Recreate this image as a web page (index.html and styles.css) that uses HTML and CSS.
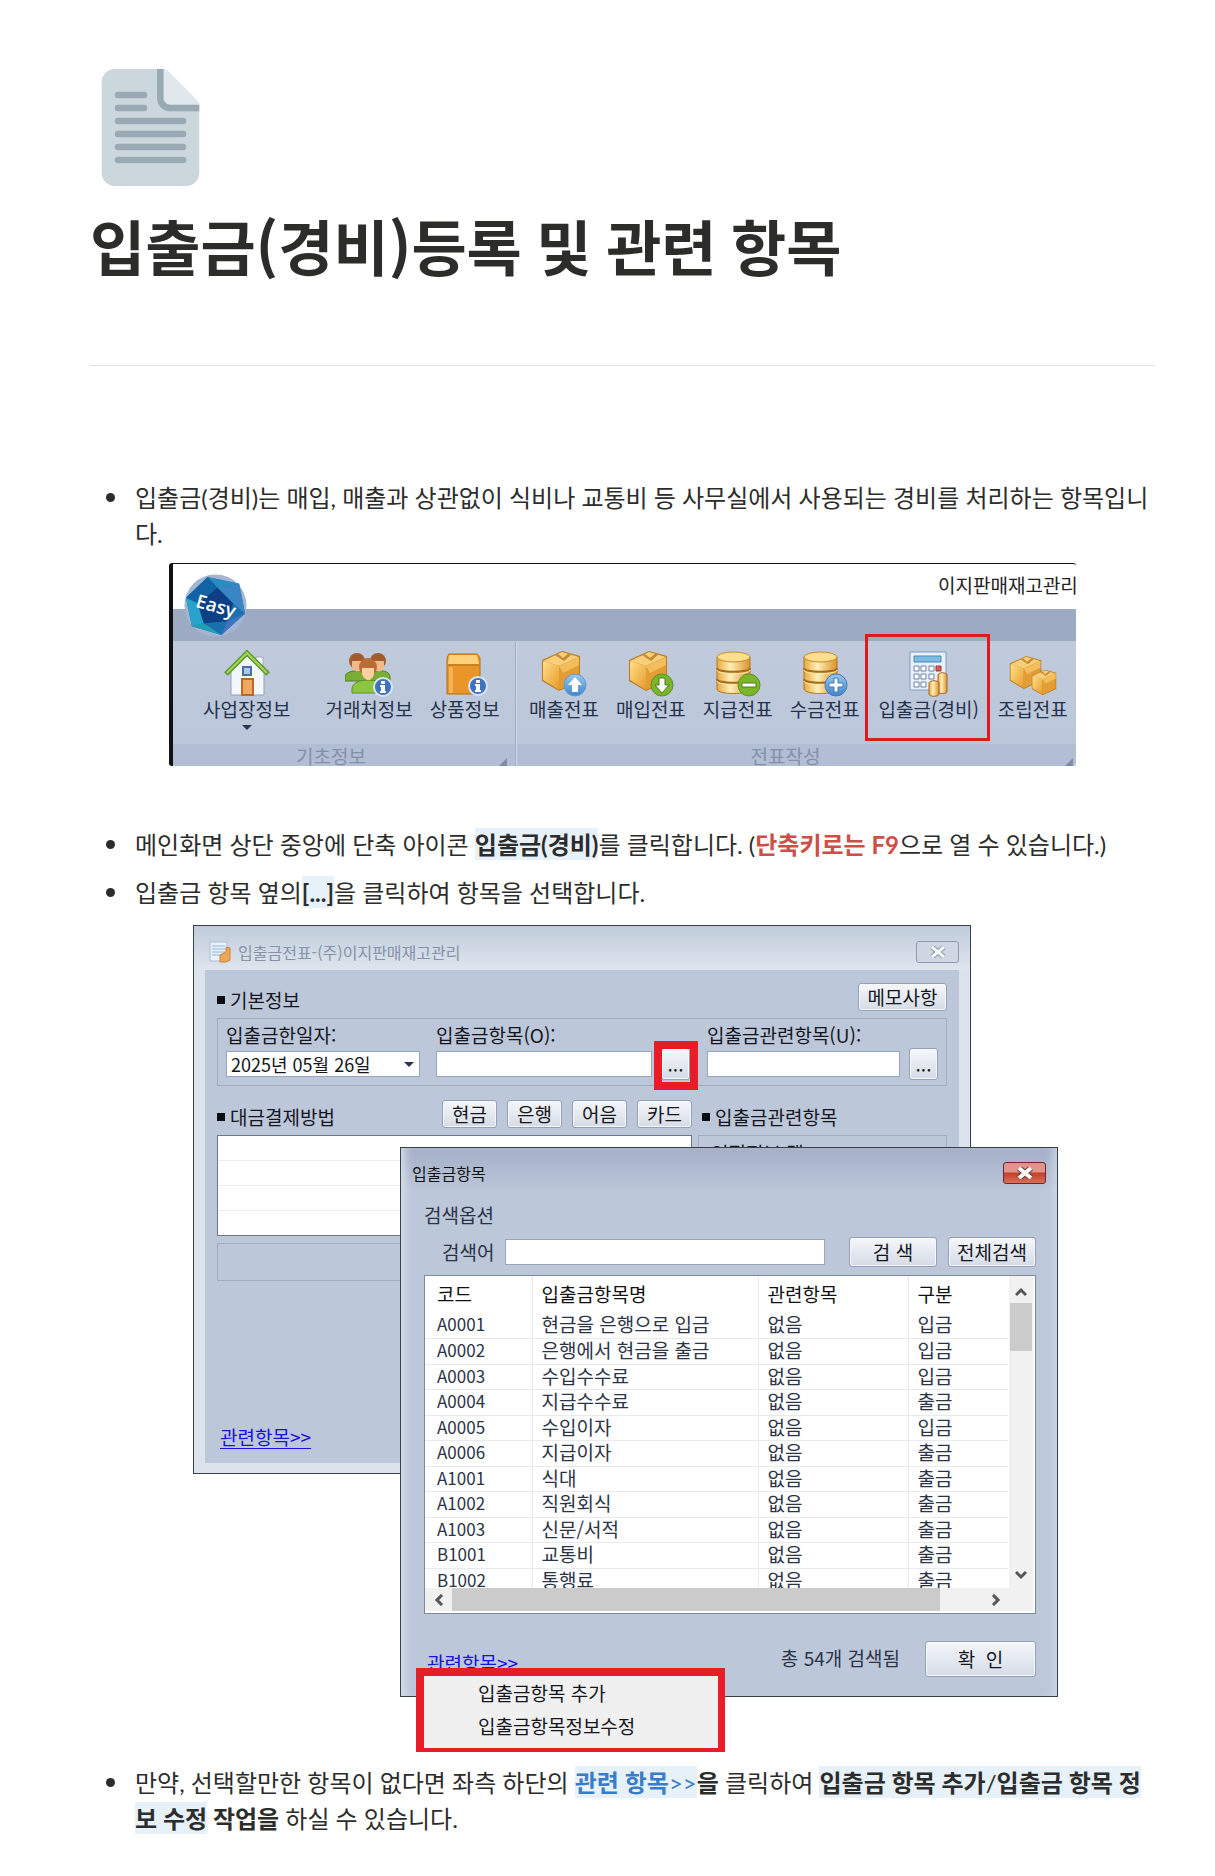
FILE: index.html
```html
<!DOCTYPE html>
<html lang="ko">
<head>
<meta charset="utf-8">
<meta name="viewport" content="width=device-width, initial-scale=1">
<title>입출금(경비)등록 및 관련 항목</title>
<link rel="stylesheet" href="styles.css">
</head>
<body>
<svg class="defs" aria-hidden="true">
  <defs>
    <linearGradient id="gold" x1="0" y1="0" x2="1" y2="1">
      <stop offset="0" stop-color="#ffe08a"/><stop offset="1" stop-color="#e8992a"/>
    </linearGradient>
    <linearGradient id="coin" x1="0" y1="0" x2="1" y2="0">
      <stop offset="0" stop-color="#e9a83c"/><stop offset=".4" stop-color="#fff0b8"/><stop offset="1" stop-color="#dc922a"/>
    </linearGradient>
    <linearGradient id="sky" x1="0" y1="0" x2="0" y2="1">
      <stop offset="0" stop-color="#9cc8ee"/><stop offset="1" stop-color="#3f86cc"/>
    </linearGradient>
    <symbol id="box" viewBox="0 0 40 42">
      <path d="M1 10 21 1l18 5v25L18 41 1 31z" fill="#b97a20"/>
      <path d="M2 11 21 2l17 5-20 9z" fill="#f7cf7b"/>
      <path d="M2 11l16 5v24L2 30z" fill="url(#gold)"/>
      <path d="M18 16 38 7v23L18 40z" fill="#e39d35"/>
      <path d="M18 16 38 7v8L22 23z" fill="#f3bd5c"/>
      <path d="M14 5l9 6 8-7-3-1-6 5-5-4z" fill="#c58a32"/>
    </symbol>
    <symbol id="coins" viewBox="0 0 36 44">
      <path d="M1 6v32c0 6 33 6 33 0V6z" fill="url(#coin)" stroke="#b27420"/>
      <ellipse cx="17.500" cy="6" rx="16.500" ry="5" fill="#ffdf8c" stroke="#c68a2e"/>
      <path d="M1 17c0 5 33 5 33 0M1 28c0 5 33 5 33 0" fill="none" stroke="#a86c1c" stroke-width="2"/>
      <path d="M1 19c0 5 33 5 33 0M1 30c0 5 33 5 33 0" fill="none" stroke="#ffe9a8"/>
    </symbol>
    <symbol id="info" viewBox="0 0 20 20">
      <circle cx="10" cy="10" r="9" fill="#3f73bd" stroke="#d8e6f7" stroke-width="2"/>
      <path d="M8 8h4v6h1v2H7v-2h1v-4H7V8zM8 4h4v3H8z" fill="#fff"/>
    </symbol>
  </defs>
</svg>

<main class="page">
  <header class="page-header">
    <svg class="page-icon" viewBox="0 0 36 36" aria-hidden="true">
      <path fill="#e1e8ed" d="M22 0c.6 0 1.100.200 1.400.600l9 9c.4.400.6.900.6 1.400v1H21V0z"/>
      <path fill="#ccd6dd" d="M22 0H7C4.800 0 3 1.800 3 4v28c0 2.200 1.800 4 4 4h22c2.200 0 4-1.800 4-4V11h-9c-1 0-2-1-2-2z"/>
      <path fill="#99aab5" d="M22 0h-2v9c0 2.200 1.800 4 4 4h9v-2h-9c-1 0-2-1-2-2z"/>
      <path stroke="#99aab5" stroke-width="2" stroke-linecap="round" d="M8 8h8M8 12h8M8 16h20M8 20h20M8 24h20M8 28h20"/>
    </svg>
    <h1>입출금<span class="korean">(경비)</span>등록 및 관련 항목</h1>
  </header>
  <hr>

  <ul class="guide">
    <li>
      <p>입출금(경비)는 매입, 매출과 상관없이 식비나 교통비 등 사무실에서 사용되는 경비를 처리하는 항목입니다.</p>
      <figure class="ribbon">
        <div class="ribbon-title">이지판매재고관리</div>
        <div class="ribbon-tabs"></div>
        <svg class="ribbon-logo" viewBox="0 0 64 64" aria-hidden="true">
          <circle cx="32" cy="32" r="31.500" fill="#a3b5d3"/>
          <path d="M24 3 56 10 62 40 38 62 8 53 2 24z" fill="#1971ad"/>
          <path d="M24 3 56 10 34 14z" fill="#2b8cc0"/><path d="M24 3 34 14 14 30 2 24z" fill="#1263a4"/>
          <path d="M56 10 62 40 50 30 34 14z" fill="#3a86c4"/><path d="M2 24 14 30 20 50 8 53z" fill="#29a3cb"/>
          <path d="M8 53 20 50 38 62z" fill="#1fa0b4"/><path d="M62 40 38 62 44 48z" fill="#4273bd"/>
          <path d="M34 14 50 30 44 48 20 50 14 30z" fill="#0c3f83"/>
          <text x="32" y="39" transform="rotate(16 32 34)" text-anchor="middle" class="logo-text">Easy</text>
        </svg>
        <div class="ribbon-groups">
          <section class="group group-basic">
            <div class="tools">
              <button class="tool tool-menu" type="button">
                <svg viewBox="0 0 48 48" aria-hidden="true">
                  <path d="M33 8h7v13h-7z" fill="#f5f7fb" stroke="#9aa7be"/>
                  <path d="M8 22 24 7l17 15v24H8z" fill="#f4f7fc" stroke="#92a0ba"/>
                  <path d="M3 25 24 4l21 21" fill="none" stroke="#5c9a2b" stroke-width="5"/>
                  <path d="M4 24 24 4l20 20" fill="none" stroke="#a4d45a" stroke-width="2"/>
                  <path d="M20 18h8v8h-8z" fill="#a8c8ec" stroke="#4c6fa8" stroke-width="2"/>
                  <path d="M19 30h11v16H19z" fill="#f0a860" stroke="#b8682a" stroke-width="2"/>
                </svg>
                <span>사업장정보</span><i class="caret"></i>
              </button>
              <button class="tool" type="button">
                <svg viewBox="0 0 48 48" aria-hidden="true">
                  <path d="M0 27c2-7 22-7 24 0v5H0zM24 27c2-7 20-7 21 0v5H24z" fill="#79ad35" stroke="#558522"/>
                  <circle cx="12" cy="12" r="8" fill="#a45c2c"/><path d="M7 12h11v6c-2 6-8 6-11 0z" fill="#f2b98a"/>
                  <circle cx="33" cy="12" r="8" fill="#a45c2c"/><path d="M28 12h11v6c-2 6-8 6-11 0z" fill="#f2b98a"/>
                  <path d="M7 40c0-12 32-12 32 0v4H7z" fill="#8cc63f" stroke="#5c9126"/>
                  <circle cx="23" cy="18" r="9" fill="#b96c35"/><path d="M17 19h12v6c-2 8-9 8-12 0z" fill="#ffcfa3"/>
                  <use href="#info" x="28" y="28" width="20" height="20"/>
                </svg>
                <span>거래처정보</span>
              </button>
              <button class="tool" type="button">
                <svg viewBox="0 0 48 48" aria-hidden="true">
                  <path d="M8 5h28l3 4v36H6V9z" fill="#e8952a" stroke="#b26c14"/>
                  <path d="M8 6h28l2 9H7z" fill="#ffd27a"/><path d="M7 15h31v2H7z" fill="#c9801f"/>
                  <path d="M8 18h4v26H8z" fill="#f7b452"/>
                  <use href="#info" x="27" y="27" width="20" height="20"/>
                </svg>
                <span>상품정보</span>
              </button>
            </div>
            <footer>기초정보</footer>
          </section>
          <section class="group group-slips">
            <div class="tools">
              <button class="tool" type="button">
                <svg viewBox="0 0 48 48" aria-hidden="true">
                  <use href="#box" x="1" y="1" width="40" height="42"/>
                  <circle cx="35" cy="36" r="11" fill="url(#sky)" stroke="#5e9bd6"/>
                  <path d="M35 28l7 8h-4v7h-6v-7h-4z" fill="#fff"/>
                </svg>
                <span>매출전표</span>
              </button>
              <button class="tool" type="button">
                <svg viewBox="0 0 48 48" aria-hidden="true">
                  <use href="#box" x="1" y="1" width="40" height="42"/>
                  <circle cx="35" cy="36" r="11" fill="#7db52a" stroke="#5c9126"/>
                  <path d="M35 44l7-8h-4v-7h-6v7h-4z" fill="#fff" stroke="#4d7d1c"/>
                </svg>
                <span>매입전표</span>
              </button>
              <button class="tool" type="button">
                <svg viewBox="0 0 48 48" aria-hidden="true">
                  <use href="#coins" x="2" y="2" width="36" height="44"/>
                  <circle cx="35" cy="36" r="11" fill="#7db52a" stroke="#5c9126"/>
                  <path d="M28 34h14v4H28z" fill="#fff" stroke="#4d7d1c"/>
                </svg>
                <span>지급전표</span>
              </button>
              <button class="tool" type="button">
                <svg viewBox="0 0 48 48" aria-hidden="true">
                  <use href="#coins" x="2" y="2" width="36" height="44"/>
                  <circle cx="35" cy="36" r="11" fill="url(#sky)" stroke="#3f78bb"/>
                  <path d="M33 29h4v5h5v4h-5v5h-4v-5h-5v-4h5z" fill="#fff" stroke="#3f78bb"/>
                </svg>
                <span>수금전표</span>
              </button>
              <button class="tool tool-marked" type="button">
                <svg viewBox="0 0 48 48" aria-hidden="true">
                  <path d="M5 3h36v38H5z" fill="#e9f1fb" stroke="#7f9cc6"/>
                  <path d="M9 7h27v6H9z" fill="#7dbce0" stroke="#4b87b4"/>
                  <path d="M9 17h5v5H9zM16 17h5v5h-5zM24 17h5v5h-5zM9 25h5v5H9zM16 25h5v5h-5zM24 25h5v5h-5zM9 33h5v5H9zM16 33h5v5h-5z" fill="#fff" stroke="#6d82ad"/>
                  <path d="M31 17h5v5h-5z" fill="#d85a50" stroke="#9c3a3a"/>
                  <path d="M33 26v17c0 2 9 2 9 0V26c0-3-9-3-9 0z" fill="url(#coin)" stroke="#a8632a"/>
                  <path d="M24 34v11c0 3 10 3 10 0V34c0-3-10-3-10 0z" fill="url(#coin)" stroke="#a8632a"/>
                </svg>
                <span>입출금(경비)</span>
              </button>
              <button class="tool" type="button">
                <svg viewBox="0 0 48 48" aria-hidden="true">
                  <use href="#box" x="0" y="6" width="33" height="35"/>
                  <use href="#box" x="22" y="20" width="26" height="27"/>
                </svg>
                <span>조립전표</span>
              </button>
            </div>
            <footer>전표작성</footer>
          </section>
        </div>
      </figure>
    </li>

    <li>
      <p>메인화면 상단 중앙에 단축 아이콘 <mark><b>입출금(경비)</b></mark>를 클릭합니다. (<b class="red">단축키로는 F9</b>으로 열 수 있습니다.)</p>
    </li>

    <li>
      <p>입출금 항목 옆의<mark><b>[...]</b></mark>을 클릭하여 항목을 선택합니다.</p>
      <figure class="desktop">
        <section class="window slip">
          <div class="titlebar">
            <svg viewBox="0 0 22 24" aria-hidden="true">
              <path d="M1 2h17v19H1z" fill="#e9f2fb" stroke="#a9bcd6"/>
              <path d="M3 6h13M3 9h13M3 12h13M3 15h10" stroke="#8fb4da"/>
              <path d="M11 15v7h6l4-2V8l-4-1v5z" fill="#eda75a" stroke="#cc8138"/>
            </svg>
            <span>입출금전표-(주)이지판매재고관리</span>
            <button class="close" type="button" aria-label="닫기"><svg viewBox="0 0 16 12" aria-hidden="true"><path d="M2 1 14 11M14 1 2 11" stroke="#8995aa" stroke-width="5"/><path d="M2 1 14 11M14 1 2 11" stroke="#fff" stroke-width="3"/></svg></button>
          </div>
          <div class="slip-body">
            <div class="bar">
              <h2>기본정보</h2>
              <button class="btn btn-memo" type="button">메모사항</button>
            </div>
            <div class="fields">
              <div class="field field-date">
                <label for="date">입출금한일자:</label>
                <div class="control"><select id="date"><option>2025년 05월 26일</option></select><i class="caret"></i></div>
              </div>
              <div class="field field-item">
                <label for="item">입출금항목(O):</label>
                <div class="control"><input id="item" type="text"><button class="btn more more-marked" type="button">...</button></div>
              </div>
              <div class="field field-related">
                <label for="related">입출금관련항목(U):</label>
                <div class="control"><input id="related" type="text"><button class="btn more" type="button">...</button></div>
              </div>
            </div>
            <div class="columns">
              <div class="bar">
                <h2>대금결제방법</h2>
                <div class="methods">
                  <button class="btn" type="button">현금</button>
                  <button class="btn" type="button">은행</button>
                  <button class="btn" type="button">어음</button>
                  <button class="btn" type="button">카드</button>
                </div>
              </div>
              <div class="bar"><h2>입출금관련항목</h2></div>
              <div class="payments"></div>
              <div class="panel">인적정보 탭</div>
            </div>
            <div class="panel summary"></div>
            <a class="link" href="#related-items">관련항목&gt;&gt;</a>
          </div>
        </section>

        <section class="window picker">
          <div class="titlebar">
            <span>입출금항목</span>
            <button class="close close-red" type="button" aria-label="닫기"><svg viewBox="0 0 16 12" aria-hidden="true"><path d="M2 1 14 11M14 1 2 11" stroke="#6b3a3a" stroke-width="6"/><path d="M2 1 14 11M14 1 2 11" stroke="#fff" stroke-width="4"/></svg></button>
          </div>
          <div class="picker-body">
            <div class="picker-heading">검색옵션</div>
            <div class="search">
              <label for="keyword">검색어</label>
              <input id="keyword" type="text">
              <button class="btn" type="button">검 색</button>
              <button class="btn" type="button">전체검색</button>
            </div>
            <div class="grid">
              <div class="grid-view">
                <table>
                  <thead><tr><th>코드</th><th>입출금항목명</th><th>관련항목</th><th>구분</th></tr></thead>
                  <tbody>
                    <tr><td>A0001</td><td>현금을 은행으로 입금</td><td>없음</td><td>입금</td></tr>
                    <tr><td>A0002</td><td>은행에서 현금을 출금</td><td>없음</td><td>입금</td></tr>
                    <tr><td>A0003</td><td>수입수수료</td><td>없음</td><td>입금</td></tr>
                    <tr><td>A0004</td><td>지급수수료</td><td>없음</td><td>출금</td></tr>
                    <tr><td>A0005</td><td>수입이자</td><td>없음</td><td>입금</td></tr>
                    <tr><td>A0006</td><td>지급이자</td><td>없음</td><td>출금</td></tr>
                    <tr><td>A1001</td><td>식대</td><td>없음</td><td>출금</td></tr>
                    <tr><td>A1002</td><td>직원회식</td><td>없음</td><td>출금</td></tr>
                    <tr><td>A1003</td><td>신문/서적</td><td>없음</td><td>출금</td></tr>
                    <tr><td>B1001</td><td>교통비</td><td>없음</td><td>출금</td></tr>
                    <tr><td>B1002</td><td>통행료</td><td>없음</td><td>출금</td></tr>
                  </tbody>
                </table>
              </div>
              <div class="vscroll">
                <svg viewBox="0 0 12 10" aria-hidden="true"><path d="M1 8 6 3l5 5"/></svg>
                <div class="thumb"></div>
                <svg viewBox="0 0 12 10" aria-hidden="true"><path d="M1 2l5 5 5-5"/></svg>
              </div>
              <div class="hscroll">
                <svg viewBox="0 0 10 12" aria-hidden="true"><path d="M8 1 3 6l5 5"/></svg>
                <div class="thumb"></div>
                <svg viewBox="0 0 10 12" aria-hidden="true"><path d="M2 1l5 5-5 5"/></svg>
              </div>
            </div>
            <div class="picker-footer">
              <a class="link" href="#related-items">관련항목&gt;&gt;</a>
              <span class="count">총 54개 검색됨</span>
              <button class="btn" type="button">확&nbsp; 인</button>
            </div>
          </div>
        </section>

        <div class="menu" role="menu">
          <button type="button" role="menuitem">입출금항목 추가</button>
          <button type="button" role="menuitem">입출금항목정보수정</button>
        </div>
      </figure>
    </li>

    <li>
      <p>만약, 선택할만한 항목이 없다면 좌측 하단의 <mark class="blue"><b>관련 항목</b>&gt;&gt;</mark><b>을</b> 클릭하여 <mark><b>입출금 항목 추가</b>/<b>입출금 항목 정보 수정</b></mark><b> 작업을</b> 하실 수 있습니다.</p>
    </li>
  </ul>
</main>
</body>
</html>
```
FILE: styles.css
```css
* { box-sizing: border-box; }

body {
  margin: 0;
  background: #fff;
  color: #2c2c2b;
  font-family: Lato, "Noto Sans CJK KR", sans-serif;
  font-size: 24px;
  line-height: 36px;
}

button, input, select { font: inherit; color: inherit; margin: 0; }
h1, h2, p, figure { margin: 0; }

.defs { position: absolute; width: 0; height: 0; }

.page { padding: 69px 60px 39px 90px; }

.page-icon { display: block; width: 117px; height: 117px; margin-left: 2px; }

h1 { margin-top: 26px; font-size: 60px; font-weight: 700; line-height: 72px; }
.korean { font-family: "Noto Sans CJK KR", sans-serif; line-height: 1; }

hr { margin: 81px 0 0; border: 0; border-top: 1px solid #e3e3e1; }

/* Guide list */
.guide { list-style: none; margin: 108px 0 0; padding: 0; }
.guide li { display: grid; grid-template-columns: 45px minmax(0, 1fr); padding: 6px 0; }
.guide li::before { content: ""; width: 9px; height: 9px; margin: 13px 0 0 16px; border-radius: 50%; background: #2c2c2b; }
.guide p { grid-column: 2; }
.guide figure { grid-column: 1 / -1; justify-self: center; max-width: 100%; font-family: "Noto Sans CJK KR", sans-serif; }

mark { background: #e7f1fa; color: inherit; padding: 2px 0 1px; }
.red { color: #cd4f45; }
.blue { color: #387dc9; }

/* Ribbon toolbar */
.ribbon {
  position: relative;
  width: 907px;
  margin: 11px 0 49px;
  overflow: hidden;
  border: solid #111;
  border-width: 1px 0 0 4px;
  border-radius: 3px;
  background: #fff;
  color: #26324c;
  font-size: 19px;
  line-height: 20px;
}
.ribbon-title { width: 138px; height: 45px; margin-left: auto; padding-top: 11px; overflow: hidden; white-space: nowrap; color: #222; }
.ribbon-tabs { height: 32px; background: #9caac3; }
.ribbon-logo { position: absolute; left: 11px; top: 10px; width: 63px; height: 63px; }
.logo-text { font: 600 19px "Open Sans", sans-serif; fill: #fff; }
.ribbon-groups { display: flex; height: 125px; background: linear-gradient(#c0cadb, #b9c6da); }
.group { display: flex; flex-direction: column; position: relative; }
.group-basic { flex: 0 0 343px; border-right: 1px solid #9facc4; }
.group-slips { flex: 1; border-left: 1px solid #d0d9e7; }
.group::after { content: ""; position: absolute; right: 8px; bottom: 0; border: 4px solid transparent; border-right-color: #7f8ba5; border-bottom-color: #7f8ba5; }
.group-slips::after { right: 3px; }
.tools { display: flex; gap: 17px; height: 104px; padding: 8px 0 0 12px; }
.group-basic .tools { padding-left: 30px; }
.group footer { flex: 1; background: #b1bed3; color: #8490a8; text-align: center; padding-top: 2px; }
.group-basic footer { padding-right: 26px; }
.group-slips footer { padding-right: 22px; }
.tool { display: flex; flex-direction: column; align-items: center; position: relative; flex: none; height: 90px; padding: 0; border: 0; background: none; }
.tool svg { width: 48px; height: 48px; margin-bottom: 2px; }
.tool-menu { margin-right: 18px; }
.tool-marked { width: 104px; }
.tool-marked::after { content: ""; position: absolute; inset: -15px -9px -2px -12px; border: 3px solid #dd1a22; }
.caret { border: 5px solid transparent; border-top-color: #2c3650; border-bottom: 0; }
.tool .caret { margin-top: 6px; }

/* Program windows */
.desktop { position: relative; width: 867px; height: 827px; margin: 14px 0 1px; color: #14161c; font-size: 19px; line-height: 20px; }
.window { position: absolute; border: 1px solid #3a3f4a; }
.titlebar { display: flex; align-items: center; font-size: 16px; }
.close { display: grid; place-items: center; width: 43px; height: 22px; margin-left: auto; padding: 0; border: 1px solid #8e9ab2; border-radius: 3px; background: #cfd7e5; }
.close svg { width: 16px; height: 12px; }
.close-red { border-color: #6d2630; background: linear-gradient(#e0958c 45%, #c33e27 50%, #d9705a); }
.btn { flex: none; height: 28px; padding: 0; border: 1px solid #94a1b8; border-radius: 3px; background: linear-gradient(#f5f7fa, #d5dbe6); box-shadow: inset 0 0 0 1px #f6f8fb; line-height: 22px; }
.link { color: #1a12df; text-decoration: underline; text-underline-offset: 3px; }
.desktop input, .desktop select { height: 26px; padding: 0 4px; border: 1px solid #9aa6bc; border-radius: 0; background: #fff; }

.slip { left: 4px; top: 0; width: 778px; height: 549px; padding: 0 11px 11px; background: #dde3ec; }
.slip .titlebar { height: 44px; margin: 0 -11px; padding: 8px 11px 0 15px; gap: 7px; background: linear-gradient(#c0ccdc, #dfe5ed); color: #8592aa; }
.slip .titlebar > svg { width: 22px; height: 24px; }
.slip-body { display: flex; flex-direction: column; height: 493px; padding: 13px 12px 16px; background: #bcc7d9; }
.bar { display: flex; justify-content: space-between; align-items: center; height: 28px; }
h2 { display: flex; align-items: center; gap: 5px; padding-top: 6px; font-size: 19px; font-weight: 400; line-height: 20px; }
h2::before { content: ""; width: 8px; height: 8px; background: #0b0b12; }
.btn-memo { width: 89px; }
.fields { display: flex; height: 68px; margin-top: 7px; padding: 6px 8px 5px; border: 1px solid #9fabc0; }
.field { display: flex; flex: none; flex-direction: column; gap: 3px; white-space: nowrap; }
.field-date { width: 194px; margin-right: 16px; }
.field-item { width: 254px; margin-right: 17px; }
.field-related { flex: 1; min-width: 0; }
.control { display: flex; align-items: center; gap: 9px; height: 32px; position: relative; }
.control input, .control select { flex: 1; min-width: 0; }
.control select { appearance: none; font-size: 18px; line-height: 24px; }
.control .caret { position: absolute; right: 6px; }
.more { position: relative; width: 29px; height: 32px; }
.more-marked::after { content: ""; position: absolute; inset: -8px -9px -11px -8px; border: 8px solid #e81d28; }
.columns { display: grid; grid-template-columns: 475px 1fr; column-gap: 6px; row-gap: 7px; margin-top: 14px; }
.columns .bar + .bar { padding-left: 4px; }
.methods { display: flex; gap: 10px; }
.methods .btn { width: 55px; }
.payments { height: 101px; border: 1px solid #6e7788; background: repeating-linear-gradient(#fff 0 24px, #ebedf0 24px 25px); }
.panel { padding: 7px 12px; border: 1px solid #9fabc0; }
.summary { height: 38px; margin-top: 7px; }
.slip .link { align-self: flex-start; margin: auto 0 0 3px; }

.picker { left: 211px; top: 222px; width: 658px; height: 550px; background: linear-gradient(#a3afc7, #bcc7d9 44px); box-shadow: inset 10px 0 8px -6px #d6deeb, inset -10px 0 8px -6px #cbd6e6; color: #2b3346; }
.picker .titlebar { height: 42px; padding: 7px 11px 0; color: #111; }
.picker-body { padding: 15px 21px 0 23px; }
.search { display: flex; align-items: center; height: 30px; margin-top: 12px; padding-left: 18px; }
.search input { flex: 1; min-width: 0; margin: 0 24px 0 11px; }
.search .btn { width: 88px; height: 30px; color: #14161c; }
.search .btn + .btn { margin-left: 11px; }
.grid { display: grid; grid-template: 312px 1fr / 1fr 24px; height: 339px; margin-top: 8px; padding: 0 2px 2px 0; border: 1px solid #7f899c; background: #fff; }
.grid-view { overflow: hidden; padding-right: 1px; }
table { width: 100%; border-collapse: collapse; table-layout: fixed; line-height: 20px; }
th { height: 37px; color: #111; font-weight: 400; }
th, td { padding: 0 0 2px 9px; text-align: left; white-space: nowrap; border-right: 1px solid #e9eaee; }
th:last-child, td:last-child { border-right: 0; }
th:nth-child(1) { width: 107px; }
th:nth-child(2) { width: 226px; }
th:nth-child(3) { width: 150px; }
th:first-child, td:first-child { padding-left: 12px; }
td:first-child { font-size: 17px; }
td { height: 25px; border-bottom: 1px solid #e9eaee; }
tr:nth-child(even) td { height: 26px; }
.vscroll { display: flex; flex-direction: column; align-items: center; padding: 11px 0 8px; background: #f1f1f1; }
.vscroll .thumb { width: 22px; height: 48px; margin: 6px 0 auto; }
.hscroll { grid-column: 1 / -1; display: flex; align-items: center; padding: 0 32px 0 9px; background: #f1f1f1; }
.hscroll .thumb { flex: 0 0 488px; height: 23px; margin: 0 auto 0 8px; }
.thumb { background: #cbcbcb; }
.vscroll svg { width: 12px; height: 10px; }
.hscroll svg { width: 10px; height: 12px; }
.vscroll path, .hscroll path { fill: none; stroke: #555; stroke-width: 3; }
.picker-footer { display: flex; align-items: center; height: 36px; margin-top: 27px; padding-left: 3px; }
.picker-footer .link { padding-top: 7px; }
.count { margin: 0 25px 2px auto; }
.picker-footer .btn { width: 111px; height: 36px; color: #14161c; }

.menu { position: absolute; left: 227px; top: 743px; width: 309px; height: 84px; padding: 7px 0 0 54px; border: solid #e81d28; border-width: 8px 7px 4px 8px; background: #f0f0f0; }
.menu button { display: block; padding: 0 0 13px; border: 0; background: none; }
```
